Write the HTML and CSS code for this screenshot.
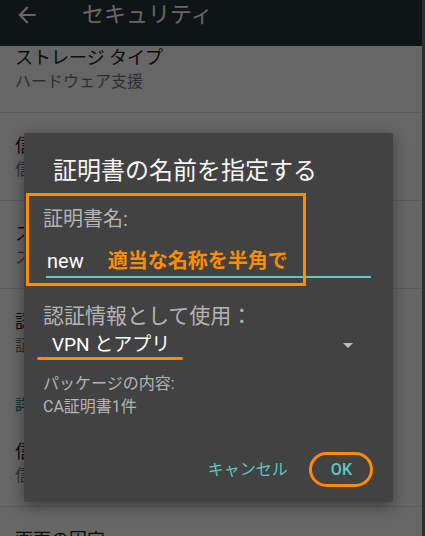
FILE: index.html
```html
<!DOCTYPE html>
<html lang="ja">
<head>
    <meta charset="utf-8">
    <title>セキュリティ</title>
    <link rel="stylesheet" href="styles.css">
</head>
<body>
    <div class="screen">
        <!-- App bar -->
        <header class="appbar">
            <svg class="back" width="26" height="26" viewBox="0 0 24 24">
                <path d="M20 11H7.83l5.59-5.59L12 4l-8 8 8 8 1.41-1.41L7.83 13H20v-2z" fill="#fff"/>
            </svg>
            <span class="appbar-title">セキュリティ</span>
        </header>

        <!-- Settings list (behind the dialog) -->
        <div class="list">
            <div class="list-inner">
                <div class="pref">
                    <div class="pref-title">ストレージ タイプ</div>
                    <div class="pref-sub">ハードウェア支援</div>
                </div>
                <div class="pref">
                    <div class="pref-title">信頼できる認証情報</div>
                    <div class="pref-sub">信頼できるCA証明書を表示する</div>
                </div>
                <div class="pref">
                    <div class="pref-title">ストレージからのインストール</div>
                    <div class="pref-sub">ストレージから証明書をインストールする</div>
                </div>
                <div class="pref no-divider">
                    <div class="pref-title">認証情報の消去</div>
                    <div class="pref-sub">証明書をすべて削除する</div>
                </div>
                <div class="pref-cat">詳細設定</div>
                <div class="pref">
                    <div class="pref-title">信頼できるエージェント</div>
                    <div class="pref-sub">信頼できるエージェントを表示または無効にする</div>
                </div>
                <div class="pref">
                    <div class="pref-title">画面の固定</div>
                    <div class="pref-sub">OFF</div>
                </div>
            </div>
        </div>

        <div class="scrim"></div>

        <!-- Dialog -->
        <div class="dialog">
            <h2 class="dialog-title">証明書の名前を指定する</h2>

            <div class="field">
                <div class="mark-box"></div>
                <label class="field-label">証明書名:</label>
                <div class="field-input">
                    <span class="input-text">new</span>
                    <span class="note">適当な名称を半角で</span>
                </div>
            </div>

            <div class="usage-label">認証情報として使用：</div>
            <div class="spinner">
                <span class="spinner-value">VPN とアプリ</span>
                <span class="caret"></span>
                <div class="mark-line"></div>
            </div>

            <div class="pkg-label">パッケージの内容:</div>
            <div class="pkg-value">CA証明書1件</div>

            <div class="actions">
                <button class="btn">キャンセル</button>
                <button class="btn btn-ok">OK</button>
            </div>
        </div>
    </div>
</body>
</html>
```

FILE: styles.css
```css
body {
    margin: 0;
    background: #2e2e2e;
    font-family: Roboto, "Noto Sans CJK JP", sans-serif;
}
.screen {
    position: relative;
    width: 422px;
    height: 536px;
    overflow: hidden;
    background: #fff;
}
.appbar {
    display: flex;
    align-items: flex-start;
    height: 46px;
    background: #263238;
    color: #fff;
}
.back {
    margin: 2px 0 0 14px;
}
.appbar-title {
    margin-left: 42px;
    font-size: 22px;
    line-height: 30px;
}
.list {
    height: 490px;
    overflow: hidden;
}
.list-inner {
    margin-top: -21px;
}
.pref {
    padding: 21px 15px 19px;
    border-bottom: 1px solid #e0e0e0;
    white-space: nowrap;
}
.pref.no-divider {
    border-bottom: none;
}
.pref-title {
    font-size: 18px;
    line-height: 24px;
    color: #212121;
}
.pref-sub {
    margin-top: 1px;
    font-size: 16px;
    line-height: 22px;
    color: #757575;
}
.pref-cat {
    box-sizing: border-box;
    height: 43px;
    padding: 19px 15px 0;
    font-size: 15px;
    line-height: 20px;
    font-weight: 500;
    color: #009688;
}
.scrim {
    position: absolute;
    inset: 0;
    background: rgba(0, 0, 0, 0.6);
}

/* dialog */
.dialog {
    position: absolute;
    left: 24px;
    top: 133px;
    width: 369px;
    height: 369px;
    box-sizing: border-box;
    padding: 22px 22px 21px 19px;
    display: flex;
    flex-direction: column;
    background: #424242;
    border-radius: 2px;
    box-shadow: 0 4px 16px rgba(0, 0, 0, 0.4);
    color: #b4b4b4;
}
.dialog-title {
    margin: 0 0 19px 10px;
    font-size: 24px;
    line-height: 32px;
    font-weight: 400;
    color: #f5f5f5;
}
.field {
    position: relative;
}
.field-label {
    display: block;
    font-size: 20px;
    line-height: 26px;
}
.field-input {
    margin: 16px 0 0 3px;
    padding: 0 0 2px 1px;
    border-bottom: 2px solid #5ec8bd;
    font-size: 20px;
    line-height: 26px;
    white-space: nowrap;
}
.input-text {
    color: #fff;
}
.note {
    margin-left: 19px;
    font-weight: 700;
    color: #ff8c00;
}
.mark-box {
    position: absolute;
    left: -17px;
    top: -13px;
    width: 280px;
    height: 93px;
    box-sizing: border-box;
    border: 3px solid #ff8c00;
}
.usage-label {
    margin-top: 24px;
    font-size: 21px;
    line-height: 28px;
}
.spinner {
    position: relative;
    display: flex;
    align-items: center;
    height: 26px;
    margin-top: 2px;
    padding-left: 9px;
}
.spinner-value {
    font-size: 19px;
    line-height: 26px;
    color: #fff;
}
.caret {
    margin: 0 18px 0 auto;
    border-left: 5.5px solid transparent;
    border-right: 5.5px solid transparent;
    border-top: 5.5px solid #bdbdbd;
}
.mark-line {
    position: absolute;
    left: -6px;
    top: 25px;
    width: 146px;
    height: 3px;
    border-radius: 2px;
    background: #ff8c00;
}
.pkg-label {
    margin-top: 15px;
    font-size: 16px;
    line-height: 22px;
}
.pkg-value {
    margin-top: 1px;
    font-size: 16px;
    line-height: 22px;
}
.actions {
    margin-top: auto;
    display: flex;
    justify-content: flex-end;
    gap: 23px;
    padding-right: 9px;
}
.btn {
    padding: 0 10px;
    border: none;
    background: none;
    font-family: Roboto, "Noto Sans CJK JP", sans-serif;
    font-size: 16px;
    line-height: 22px;
    color: #5ec8bd;
}
.btn-ok {
    position: relative;
    font-weight: 500;
}
.btn-ok::after {
    content: "";
    position: absolute;
    left: -12px;
    right: -11px;
    top: -7px;
    bottom: -6px;
    border: 3px solid #ff8c00;
    border-radius: 18px;
}
```
